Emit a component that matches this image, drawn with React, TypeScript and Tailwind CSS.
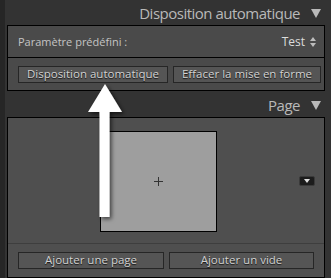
import React from 'react';

function Btn({ label, className }: { label: string, className: string }) {
    return (
        <button
            className={"h-[17px] flex items-center justify-center bg-[#555555] border border-[#262626] text-[11.5px] leading-none text-[#d2d2d2] [text-shadow:0_1px_1px_#111] " + className}
        >
            {label}
        </button>
    );
}

function Header({ title }: { title: string }) {
    return (
        <div className="flex items-center justify-end gap-[11px] pr-[10px] pt-[2px] text-[15px] tracking-[-0.5px] text-[#b9b9b9]">
            <span>{title}</span>
            <svg width="10" height="9" viewBox="0 0 10 9">
                <polygon points="0,0 10,0 5,9" fill="#b9b9b9" />
            </svg>
        </div>
    );
}

export default function App() {
    return (
        <div className="relative w-[331px] h-[278px] overflow-hidden bg-[#333333] border-l-[5px] border-[#262626] font-['Open_Sans',sans-serif]">
            <div className="h-[25px] flex flex-col justify-center">
                <Header title="Disposition automatique" />
            </div>
            <div className="ml-[2px] w-[318px] h-[66px] border border-black bg-[#4a4a4a] flex flex-col">
                <div className="h-[31px] flex items-center justify-between pl-[10px] pr-[8px] pt-[1px] text-[11px] text-[#c4c4c4]">
                    <span>Paramètre prédéfini :</span>
                    <span className="flex items-center gap-[5px] text-[12px] text-[#dcdcdc]">
                        Test
                        <svg width="6" height="10" viewBox="0 0 6 10">
                            <polygon points="0,4 6,4 3,0" fill="#bdbdbd" />
                            <polygon points="0,6 6,6 3,10" fill="#bdbdbd" />
                        </svg>
                    </span>
                </div>
                <div className="h-px bg-black" />
                <div className="flex-1 flex items-center gap-[5px] pl-[10px]">
                    <Btn label="Disposition automatique" className="w-[150px]" />
                    <Btn label="Effacer la mise en forme" className="w-[148px]" />
                </div>
            </div>
            <div className="h-[26px] flex flex-col justify-center">
                <Header title="Page" />
            </div>
            <div className="ml-[2px] w-[318px] h-[161px] border border-black bg-[#4f4f4f] flex flex-col">
                <div className="relative h-[125px] flex items-start">
                    <div className="ml-[92px] mt-[13px] w-[117px] h-[101px] bg-[#9e9e9e] border border-black flex items-center justify-center">
                        <svg width="9" height="9" viewBox="0 0 9 9">
                            <path d="M4.5 0V9M0 4.5H9" stroke="#333" strokeWidth="1" />
                        </svg>
                    </div>
                    <div className="ml-[82px] mt-[58px] w-[16px] h-[10px] rounded-[2px] bg-[#1c1c1c] border border-[#3a3a3a] flex items-center justify-center">
                        <svg width="6" height="4" viewBox="0 0 6 4">
                            <polygon points="0,0 6,0 3,4" fill="#e0e0e0" />
                        </svg>
                    </div>
                </div>
                <div className="h-px bg-[#3e3e3e]" />
                <div className="flex-1 flex items-center gap-[5px] pl-[10px] pb-[1px]">
                    <Btn label="Ajouter une page" className="w-[146px]" />
                    <Btn label="Ajouter un vide" className="w-[145px]" />
                </div>
            </div>
            <svg className="absolute left-0 top-0" width="331" height="278" viewBox="0 0 331 278">
                <defs>
                    <filter id="sh" x="-50%" y="-50%" width="200%" height="200%">
                        <feDropShadow dx="2" dy="2" stdDeviation="2" floodColor="#000" floodOpacity="0.6" />
                    </filter>
                </defs>
                <polygon
                    points="100,84 117,112 104.5,112 104.5,217 94.5,217 94.5,112 83,112"
                    fill="#ffffff"
                    filter="url(#sh)"
                />
            </svg>
        </div>
    );
}
